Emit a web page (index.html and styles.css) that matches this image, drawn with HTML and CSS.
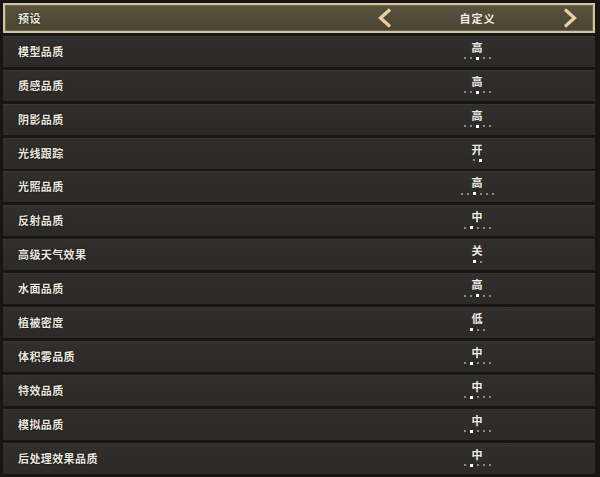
FILE: index.html
```html
<!DOCTYPE html>
<html lang="zh">
<head>
<meta charset="utf-8">
<link rel="stylesheet" href="styles.css">
</head>
<body>
<div class="panel">
  <div class="row header">
    <div class="label">预设</div>
    <div class="value">
      <svg class="arrow" width="15" height="20" viewBox="0 0 15 20"><path d="M13 1.5 L3.5 10 L13 18.5" fill="none" stroke="#e8d3a0" stroke-width="3.2" stroke-linejoin="miter"/></svg>
      <span class="preset">自定义</span>
      <svg class="arrow" width="15" height="20" viewBox="0 0 15 20"><path d="M2 1.5 L11.5 10 L2 18.5" fill="none" stroke="#e8d3a0" stroke-width="3.2" stroke-linejoin="miter"/></svg>
    </div>
  </div>
  <div class="row"><div class="label">模型品质</div><div class="value"><span class="v">高</span><span class="dots"><i></i><i></i><i class="on"></i><i></i><i></i></span></div></div>
  <div class="row"><div class="label">质感品质</div><div class="value"><span class="v">高</span><span class="dots"><i></i><i></i><i class="on"></i><i></i><i></i></span></div></div>
  <div class="row"><div class="label">阴影品质</div><div class="value"><span class="v">高</span><span class="dots"><i></i><i></i><i class="on"></i><i></i><i></i></span></div></div>
  <div class="row"><div class="label">光线跟踪</div><div class="value"><span class="v">开</span><span class="dots"><i></i><i class="on"></i></span></div></div>
  <div class="row"><div class="label">光照品质</div><div class="value"><span class="v">高</span><span class="dots"><i></i><i></i><i class="on"></i><i></i><i></i><i></i></span></div></div>
  <div class="row"><div class="label">反射品质</div><div class="value"><span class="v">中</span><span class="dots"><i></i><i class="on"></i><i></i><i></i><i></i></span></div></div>
  <div class="row"><div class="label">高级天气效果</div><div class="value"><span class="v">关</span><span class="dots"><i class="on"></i><i></i></span></div></div>
  <div class="row"><div class="label">水面品质</div><div class="value"><span class="v">高</span><span class="dots"><i></i><i></i><i class="on"></i><i></i><i></i></span></div></div>
  <div class="row"><div class="label">植被密度</div><div class="value"><span class="v">低</span><span class="dots"><i class="on"></i><i></i><i></i></span></div></div>
  <div class="row"><div class="label">体积雾品质</div><div class="value"><span class="v">中</span><span class="dots"><i></i><i class="on"></i><i></i><i></i><i></i></span></div></div>
  <div class="row"><div class="label">特效品质</div><div class="value"><span class="v">中</span><span class="dots"><i></i><i class="on"></i><i></i><i></i><i></i></span></div></div>
  <div class="row"><div class="label">模拟品质</div><div class="value"><span class="v">中</span><span class="dots"><i></i><i class="on"></i><i></i><i></i><i></i></span></div></div>
  <div class="row"><div class="label">后处理效果品质</div><div class="value"><span class="v">中</span><span class="dots"><i></i><i class="on"></i><i></i><i></i><i></i></span></div></div>
</div>
</body>
</html>
```
FILE: styles.css
```css
html, body {
  margin: 0;
  padding: 0;
  background: #171615;
  width: 600px;
  height: 477px;
  overflow: hidden;
  font-family: "Noto Sans CJK SC", "Noto Sans", sans-serif;
}
.panel {
  display: flex;
  flex-direction: column;
  gap: 2.9px;
  padding: 3px 5px 0 3px;
}
.row {
  height: 31px;
  flex: none;
  display: flex;
  align-items: center;
  background: linear-gradient(#302f2c, #2b2a28);
  box-sizing: border-box;
  border-top: 1px solid #373633;
}
.header {
  height: 30px;
  background: linear-gradient(#5a533f, #4a4434);
  border: 2px solid #cfc3a0;
  box-shadow: inset 0 0 0 1px #6f664e;
}
.label {
  flex: 1;
  padding-left: 15px;
  margin-bottom: 2px;
  box-sizing: border-box;
  color: #ebe7df;
  font-size: 11px;
  font-weight: 700;
  letter-spacing: 0.4px;
  text-shadow: 0 0 2px #000;
}
.header .label { padding-left: 13px; margin-bottom: 0; }
.value {
  width: 160px;
  margin-right: 38px;
  display: flex;
  flex-direction: column;
  align-items: center;
  color: #f0ede6;
  font-size: 11px;
  font-weight: 700;
}
.header .value {
  flex-direction: row;
  justify-content: space-between;
  width: 201px;
  margin-right: 15px;
}
.preset { font-size: 11px; letter-spacing: 1px; }
.v { line-height: 13px; margin-top: -3px; }
.dots {
  display: flex;
  gap: 4px;
  margin-top: 3px;
  align-items: center;
}
.dots i {
  width: 2px;
  height: 2px;
  background: #8c8a86;
  display: block;
}
.dots i.on {
  width: 3px;
  height: 3px;
  background: #ffffff;
}
```
